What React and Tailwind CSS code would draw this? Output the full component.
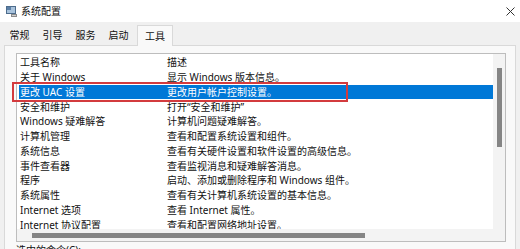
import React from "react";

const rows = [
  ["关于 Windows", "显示 Windows 版本信息。"],
  ["更改 UAC 设置", "更改用户帐户控制设置。", true],
  ["安全和维护", "打开“安全和维护”"],
  ["Windows 疑难解答", "计算机问题疑难解答。"],
  ["计算机管理", "查看和配置系统设置和组件。"],
  ["系统信息", "查看有关硬件设置和软件设置的高级信息。"],
  ["事件查看器", "查看监视消息和疑难解答消息。"],
  ["程序", "启动、添加或删除程序和 Windows 组件。"],
  ["系统属性", "查看有关计算机系统设置的基本信息。"],
  ["Internet 选项", "查看 Internet 属性。"],
  ["Internet 协议配置", "查看和配置网络地址设置。"],
];

const tabs = ["常规", "引导", "服务", "启动"];

function AppIcon() {
  return (
    <svg width="11" height="11" viewBox="0 0 11 11">
      <rect x="0.5" y="0.5" width="9" height="7" fill="#a9c3dc" stroke="#4d6c8c" />
      <rect x="1" y="1" width="4" height="3" fill="#5b7fa6" />
      <rect x="5" y="8" width="6" height="3" fill="#8c8c8c" />
      <rect x="6" y="9" width="4" height="1" fill="#d0d0d0" />
    </svg>
  );
}

export default function App() {
  return (
    <div className="relative w-[520px] h-[249px] overflow-hidden bg-[#f0f0f0] font-['Noto_Sans','Noto_Sans_CJK_SC',sans-serif] text-[10px] text-[#111111]">
      {/* title bar */}
      <div className="h-[22px] bg-white flex items-center pl-[6px] pr-[5px]">
        <AppIcon />
        <span className="ml-[4px] text-[10px] leading-none">系统配置</span>
        <div className="ml-auto">
          <svg width="9" height="9" viewBox="0 0 9 9">
            <path d="M0.5 0.5L8.5 8.5M8.5 0.5L0.5 8.5" stroke="#333" strokeWidth="1" />
          </svg>
        </div>
      </div>

      {/* tab strip */}
      <div className="h-[23px] flex items-end pl-[3px]">
        {tabs.map((t) => (
          <div key={t} className="w-[33px] h-[20px] flex items-center justify-center leading-none">
            {t}
          </div>
        ))}
        <div className="relative z-10 -mb-px ml-[2px] w-[36px] h-[21px] bg-[#f9f9f9] border border-b-0 border-[#d9d9d9] flex items-center justify-center leading-none">
          工具
        </div>
      </div>

      {/* tab page */}
      <div className="mx-[4px] h-[300px] bg-[#f9f9f9] border border-[#d9d9d9] pl-[11px] pt-[7px]">
        <div className="relative w-[490px] h-[189px] border border-[#bdbdbd] bg-white flex flex-col">
          <div className="flex flex-1 min-h-0">
            <div className="flex-1 min-w-0 overflow-hidden pt-[1px] pl-[2px]">
              <div className="flex h-[14.75px] items-center pl-[1px] leading-none">
                <div className="w-[147px] shrink-0">工具名称</div>
                <div>描述</div>
              </div>
              {rows.map(([a, b, sel]) => (
                <div
                  key={a}
                  className={
                    sel
                      ? "flex h-[14.75px] items-center pl-[1px] leading-none whitespace-nowrap bg-[#0078d7] text-white"
                      : "flex h-[14.75px] items-center pl-[1px] leading-none whitespace-nowrap"
                  }
                >
                  <div className="w-[147px] shrink-0">{a}</div>
                  <div>{b}</div>
                </div>
              ))}
            </div>
            {/* vertical scrollbar */}
            <div className="w-[12px] shrink-0 bg-[#f3f3f3] pt-[14px] flex justify-center">
              <div className="w-[5px] h-[79px] bg-[#858585]" />
            </div>
          </div>
          {/* horizontal scrollbar */}
          <div className="h-[12px] shrink-0 bg-[#f3f3f3] flex items-center pl-[15px] pr-[12px]">
            <div className="w-[333px] h-[5px] bg-[#858585]" />
          </div>
        </div>
        <div className="mt-[3px] leading-none">选中的命令(C):</div>
      </div>

      {/* annotation box */}
      <div className="absolute left-[12px] top-[82px] w-[336px] h-[20px] border-2 border-[#d33b3e]" />
    </div>
  );
}
